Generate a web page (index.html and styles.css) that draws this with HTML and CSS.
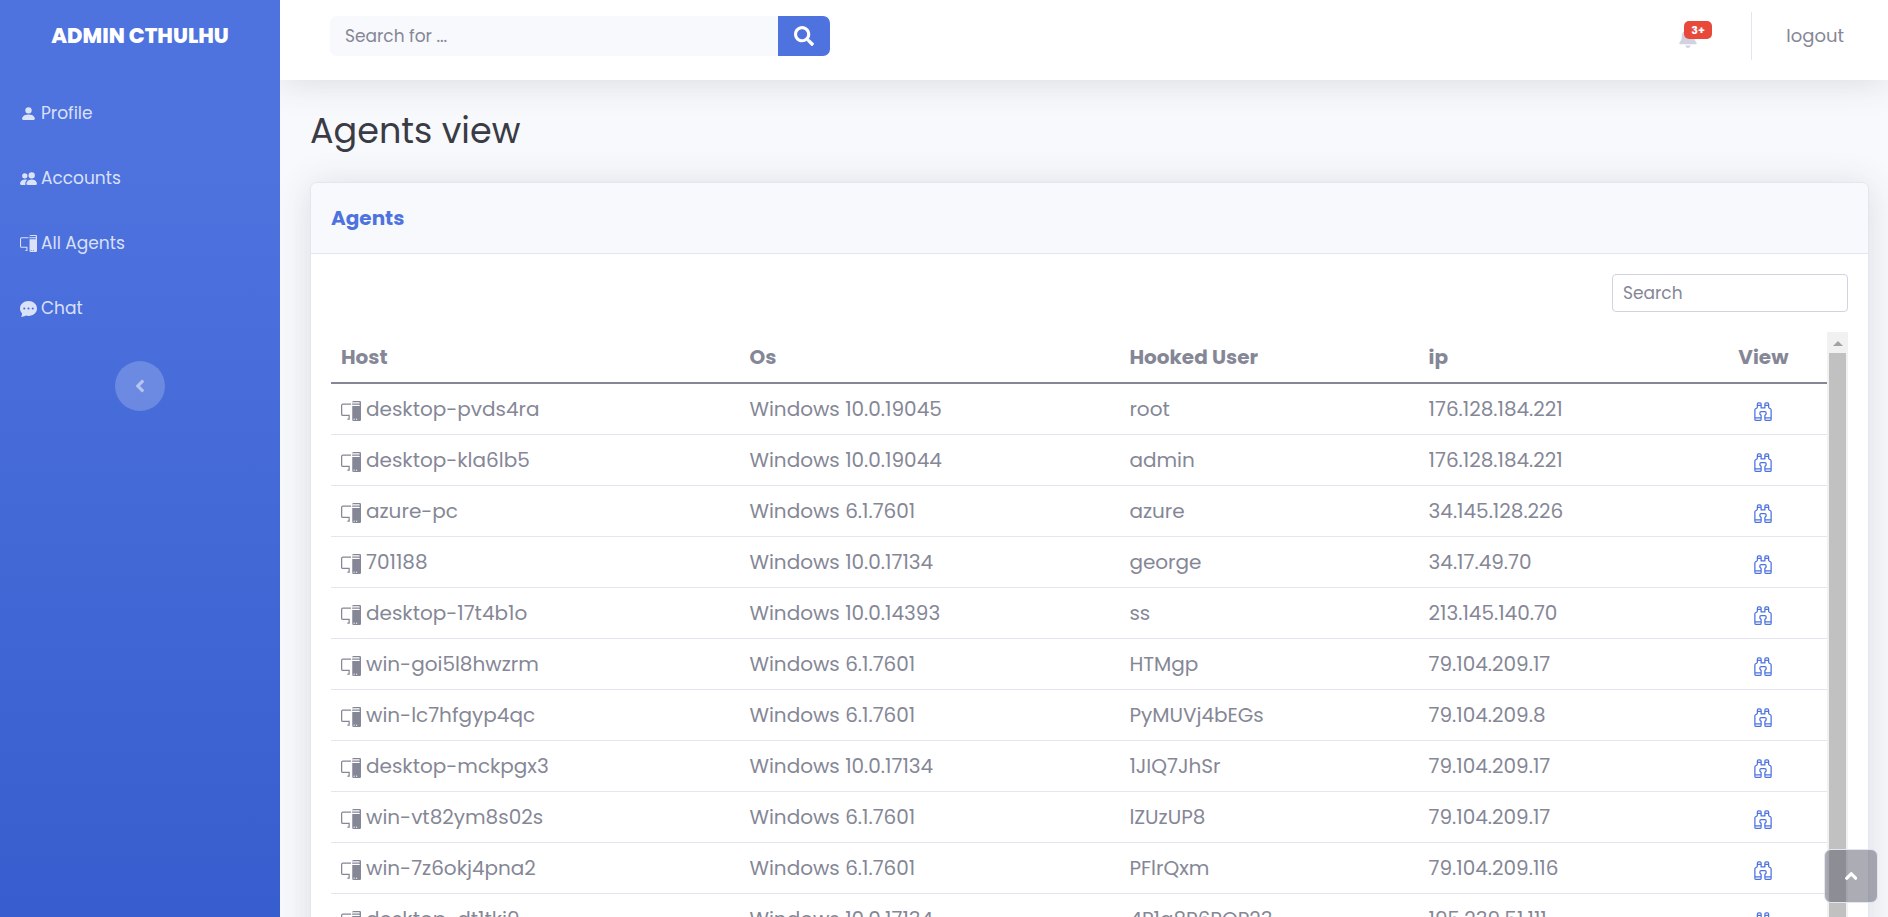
FILE: index.html
```
<!DOCTYPE html>
<html lang="en">
<head>
<meta charset="utf-8">
<title>Agents view</title>
<link rel="stylesheet" href="styles.css">
</head>
<body>
<svg class="sprite" aria-hidden="true">
  <symbol id="pc" viewBox="0 0 16 16"><path d="M9 1a1 1 0 0 1 1-1h5a1 1 0 0 1 1 1v14a1 1 0 0 1-1 1h-5a1 1 0 0 1-1-1V1Zm1 13.5a.5.5 0 1 0 1 0 .5.5 0 0 0-1 0Zm2 0a.5.5 0 1 0 1 0 .5.5 0 0 0-1 0ZM9.500 1a.5.5 0 0 0 0 1h5a.5.5 0 0 0 0-1h-5ZM9 3.500a.5.5 0 0 0 .5.5h5a.5.5 0 0 0 0-1h-5a.5.5 0 0 0-.5.5ZM1.500 2A1.500 1.500 0 0 0 0 3.500v7A1.500 1.500 0 0 0 1.500 12H6v2h-.5a.5.5 0 0 0 0 1H7v-4H1.500a.5.5 0 0 1-.5-.5v-7a.5.5 0 0 1 .5-.5H8V2H1.500Z"/></symbol>
  <symbol id="binoculars" viewBox="0 0 16 16"><path d="M3 2.500A1.500 1.500 0 0 1 4.500 1h1A1.500 1.500 0 0 1 7 2.500V5h2V2.500A1.500 1.500 0 0 1 10.500 1h1A1.500 1.500 0 0 1 13 2.500v2.382a.5.5 0 0 0 .276.447l.895.447A1.500 1.500 0 0 1 15 7.118V14.500a1.500 1.500 0 0 1-1.500 1.500h-3A1.500 1.500 0 0 1 9 14.500v-3a.5.5 0 0 1 .146-.354l.854-.853V9.500a.5.5 0 0 0-.5-.5h-3a.5.5 0 0 0-.5.5v.793l.854.853A.5.5 0 0 1 7 11.500v3A1.500 1.500 0 0 1 5.500 16h-3A1.500 1.500 0 0 1 1 14.500V7.118a1.500 1.500 0 0 1 .83-1.342l.894-.447A.5.5 0 0 0 3 4.882V2.500zM4.500 2a.5.5 0 0 0-.5.5V3h2v-.5a.5.5 0 0 0-.5-.5h-1zM6 4H4v.882a1.500 1.500 0 0 1-.83 1.342l-.894.447A.5.5 0 0 0 2 7.118V13h4v-1.293l-.854-.853A.5.5 0 0 1 5 10.500v-1A1.500 1.500 0 0 1 6.500 8h3A1.500 1.500 0 0 1 11 9.500v1a.5.5 0 0 1-.146.354l-.854.853V13h4V7.118a.5.5 0 0 0-.276-.447l-.895-.447A1.500 1.500 0 0 1 12 4.882V4h-2v1.500a.5.5 0 0 1-.5.5h-3a.5.5 0 0 1-.5-.5V4zm4-1h2v-.5a.5.5 0 0 0-.5-.5h-1a.5.5 0 0 0-.5.5V3zm4 11h-4v.5a.5.5 0 0 0 .5.5h3a.5.5 0 0 0 .5-.5V14zm-8 0H2v.5a.5.5 0 0 0 .5.5h3a.5.5 0 0 0 .5-.5V14z"/></symbol>
</svg>
<div class="shell">
  <nav class="sidebar">
    <a class="brand" href="#">ADMIN CTHULHU</a>
    <a class="nav-link" href="#"><svg class="nav-icon" viewBox="0 0 16 16"><path d="M3 14s-1 0-1-1 1-4 6-4 6 3 6 4-1 1-1 1H3Zm5-6a3 3 0 1 0 0-6 3 3 0 0 0 0 6Z"/></svg>Profile</a>
    <a class="nav-link" href="#"><svg class="nav-icon" viewBox="0 0 16 16"><path d="M7 14s-1 0-1-1 1-4 5-4 5 3 5 4-1 1-1 1H7Zm4-6a3 3 0 1 0 0-6 3 3 0 0 0 0 6Zm-5.784 6A2.238 2.238 0 0 1 5 13c0-1.355.68-2.750 1.936-3.720A6.325 6.325 0 0 0 5 9c-4 0-5 3-5 4s1 1 1 1h4.216ZM4.500 8a2.500 2.500 0 1 0 0-5 2.500 2.500 0 0 0 0 5Z"/></svg>Accounts</a>
    <a class="nav-link" href="#"><svg class="nav-icon"><use href="#pc"/></svg>All Agents</a>
    <a class="nav-link" href="#"><svg class="nav-icon" viewBox="0 0 16 16"><path d="M16 8c0 3.866-3.582 7-8 7a9.060 9.060 0 0 1-2.347-.306c-.584.296-1.925.864-4.181 1.234-.2.032-.352-.176-.273-.362.354-.836.674-1.950.77-2.966C.744 11.370 0 9.760 0 8c0-3.866 3.582-7 8-7s8 3.134 8 7zM5 8a1 1 0 1 0-2 0 1 1 0 0 0 2 0zm4 0a1 1 0 1 0-2 0 1 1 0 0 0 2 0zm3 1a1 1 0 1 0 0-2 1 1 0 0 0 0 2z"/></svg>Chat</a>
    <button class="collapse" type="button" aria-label="Collapse menu"><svg viewBox="0 0 256 512"><path d="M31.700 239l136-136c9.400-9.400 24.600-9.400 33.900 0l22.600 22.600c9.400 9.400 9.400 24.600 0 33.900L127.900 256l96.400 96.400c9.400 9.400 9.400 24.600 0 33.900L201.700 409c-9.400 9.400-24.600 9.400-33.900 0l-136-136c-9.500-9.400-9.500-24.600-.1-34z"/></svg></button>
  </nav>
  <div class="content">
    <header class="topbar">
      <form class="site-search">
        <input type="text" placeholder="Search for ..." aria-label="Search for">
        <button type="button" aria-label="Search"><svg viewBox="0 0 512 512"><path d="M505 442.700L405.300 343c-4.500-4.500-10.600-7-17-7H372c27.600-35.300 44-79.700 44-128C416 93.100 322.900 0 208 0S0 93.100 0 208s93.100 208 208 208c48.300 0 92.700-16.400 128-44v16.300c0 6.400 2.500 12.500 7 17l99.700 99.700c9.400 9.400 24.600 9.400 33.900 0l28.300-28.300c9.400-9.400 9.400-24.600.1-34zM208 336c-70.700 0-128-57.200-128-128 0-70.700 57.200-128 128-128 70.700 0 128 57.200 128 128 0 70.700-57.200 128-128 128z"/></svg></button>
      </form>
      <div class="user-nav">
        <a class="alerts" href="#" aria-label="Alerts"><svg viewBox="0 0 448 512"><path d="M224 512c35.320 0 63.970-28.650 63.970-64H160.030c0 35.350 28.650 64 63.970 64zm215.390-149.710c-19.320-20.760-55.470-51.990-55.470-154.290 0-77.700-54.480-139.900-127.940-155.160V32c0-17.670-14.320-32-31.980-32s-31.980 14.330-31.980 32v20.840C118.560 68.100 64.080 130.300 64.080 208c0 102.300-36.150 133.530-55.470 154.290-6 6.450-8.660 14.160-8.610 21.710.11 16.400 12.980 32 32.100 32h383.800c19.120 0 32-15.600 32.100-32 .05-7.550-2.610-15.270-8.610-21.710z"/></svg><span class="badge">3+</span></a>
        <a class="logout" href="#">logout</a>
      </div>
    </header>
    <main class="main">
      <h1>Agents view</h1>
      <section class="card">
        <h2>Agents</h2>
        <div class="card-body">
          <input class="filter" type="search" placeholder="Search" aria-label="Search agents">
          <div class="table-area">
            <table>
              <thead><tr><th class="c-host">Host</th><th class="c-os">Os</th><th class="c-user">Hooked User</th><th class="c-ip">ip</th><th class="c-view">View</th></tr></thead>
              <tbody id="agents"></tbody>
            </table>
            <div class="scroll-track" aria-hidden="true"><span class="scroll-arrow"></span><span class="scroll-thumb"></span></div>
          </div>
        </div>
      </section>
    </main>
  </div>
</div>
<a class="to-top" href="#" aria-label="Back to top"><svg viewBox="0 0 320 512"><path d="M177 159.700l136 136c9.400 9.400 9.400 24.600 0 33.900l-22.600 22.600c-9.400 9.400-24.600 9.400-33.900 0L160 255.900l-96.400 96.400c-9.400 9.400-24.600 9.400-33.900 0L7 329.700c-9.400-9.400-9.400-24.600 0-33.900l136-136c9.400-9.500 24.600-9.500 34-.1z"/></svg></a>
<script src="agents.js"></script>
</body>
</html>
```
FILE: styles.css
```
* { box-sizing: border-box; }
body {
  margin: 0;
  height: 100vh;
  overflow: hidden;
  background: #f8f9fc;
  color: #858796;
  font: 400 20px/30px Poppins, Inter, "Open Sans", sans-serif;
}
a { color: inherit; text-decoration: none; }
h1, h2 { margin: 0; }
svg { fill: currentColor; }
button { border: 0; padding: 0; cursor: pointer; }
input { font-family: inherit; color: #6e707e; outline: 0; }
input::placeholder { color: #858796; opacity: 1; }
.sprite { display: none; }

.shell { display: flex; min-height: 175vh; }
.sidebar {
  position: relative;
  z-index: 1;
  flex: 0 0 280px;
  display: flex;
  flex-direction: column;
  background: linear-gradient(180deg, #4e73df 10%, #224abe 100%);
  color: rgba(255, 255, 255, .8);
}
.brand {
  padding: 21px 20px;
  margin-bottom: 9px;
  color: #fff;
  font-size: 21px;
  font-weight: 800;
  text-align: center;
}
.nav-link {
  display: flex;
  align-items: center;
  gap: 4px;
  padding: 20px;
  font-size: 17px;
  line-height: 25px;
}
.nav-icon { width: 17px; height: 17px; }
.collapse {
  display: flex;
  align-items: center;
  justify-content: center;
  width: 50px;
  height: 50px;
  margin: 20px auto;
  border-radius: 50%;
  background: rgba(255, 255, 255, .2);
  color: rgba(255, 255, 255, .5);
}
.collapse svg { height: 20px; }

.content { flex: 1; min-width: 0; }
.topbar {
  display: flex;
  justify-content: space-between;
  height: 80px;
  padding: 0 44px 0 50px;
  background: #fff;
  box-shadow: 0 3px 35px rgba(58, 59, 69, .15);
}
.site-search { display: flex; width: 500px; height: 40px; margin-top: 16px; }
.site-search input {
  flex: 1;
  min-width: 0;
  padding: 0 15px;
  border: 0;
  border-radius: 7px 0 0 7px;
  background: #f8f9fc;
  font-size: 17px;
}
.site-search button {
  display: flex;
  align-items: center;
  justify-content: center;
  width: 52px;
  border-radius: 0 7px 7px 0;
  background: #4e73df;
  color: #fff;
}
.site-search svg { height: 20px; }
.user-nav { display: flex; height: 48px; margin-top: 12px; }
.alerts { position: relative; padding: 16px 54px 0 0; color: #d1d3e2; line-height: 0; }
.alerts svg { height: 20px; width: 18px; }
.badge {
  position: absolute;
  top: 9px;
  left: 5px;
  padding: 0 7px;
  border-radius: 5px;
  background: #e74a3b;
  color: #fff;
  font-size: 11px;
  font-weight: 700;
  line-height: 18px;
}
.logout {
  padding-left: 34px;
  border-left: 1px solid #e3e6f0;
  font-size: 18px;
  line-height: 48px;
}

.main { padding: 30px 19px 30px 30px; }
h1 { color: #3a3b45; font-size: 35px; font-weight: 400; line-height: 42px; margin-bottom: 30px; }
.card {
  border: 1px solid #e3e6f0;
  border-radius: 7px;
  background: #fff;
  box-shadow: 0 3px 35px rgba(58, 59, 69, .15);
}
h2 {
  padding: 20px;
  border-bottom: 1px solid #e3e6f0;
  border-radius: 7px 7px 0 0;
  background: #f8f9fc;
  color: #4e73df;
  font-size: 20px;
  font-weight: 700;
}
.card-body { display: flex; flex-direction: column; padding: 20px; }
.filter {
  align-self: flex-end;
  width: 236px;
  height: 38px;
  margin-bottom: 20px;
  padding: 0 10px;
  border: 1px solid #d1d3e2;
  border-radius: 4px;
  font-size: 17px;
}
.table-area { display: flex; }
table { flex: 1; border-collapse: separate; border-spacing: 0; table-layout: fixed; }
th, td { padding: 10px; border-bottom: 1px solid #e3e6f0; text-align: left; }
th { border-bottom: 2px solid #858796; font-weight: 700; }
.c-host { width: 27.3%; }
.c-os { width: 25.4%; }
.c-user { width: 20%; }
.c-ip { width: 18.8%; }
.c-view { width: 8.5%; text-align: center; }
.host { display: flex; align-items: center; gap: 5px; }
.host svg { width: 20px; height: 20px; margin-top: 4px; }
.view { display: flex; justify-content: center; color: #4e73df; }
.view svg { width: 20px; height: 20px; margin: 7px 0 3px; }
.scroll-track {
  display: flex;
  flex-direction: column;
  align-items: center;
  width: 21px;
  background: #f1f1f1;
}
.scroll-arrow {
  margin: 9px 0 7px;
  border: 5px solid transparent;
  border-top: 0;
  border-bottom-color: #a3a3a3;
}
.scroll-thumb { flex: 1; width: 17px; background: #c1c1c1; }

.to-top {
  position: fixed;
  right: 10px;
  bottom: 14px;
  display: flex;
  align-items: center;
  justify-content: center;
  width: 54px;
  height: 54px;
  border: 1px solid #e3e6f0;
  border-radius: 7px;
  background: rgba(90, 92, 105, .5);
  color: #fff;
}
.to-top svg { height: 20px; }
```
FILE: agents.js
```
const agents = [
  ["desktop-pvds4ra", "Windows 10.0.19045", "root", "176.128.184.221"],
  ["desktop-kla6lb5", "Windows 10.0.19044", "admin", "176.128.184.221"],
  ["azure-pc", "Windows 6.1.7601", "azure", "34.145.128.226"],
  ["701188", "Windows 10.0.17134", "george", "34.17.49.70"],
  ["desktop-17t4b1o", "Windows 10.0.14393", "ss", "213.145.140.70"],
  ["win-goi5l8hwzrm", "Windows 6.1.7601", "HTMgp", "79.104.209.17"],
  ["win-lc7hfgyp4qc", "Windows 6.1.7601", "PyMUVj4bEGs", "79.104.209.8"],
  ["desktop-mckpgx3", "Windows 10.0.17134", "1JIQ7JhSr", "79.104.209.17"],
  ["win-vt82ym8s02s", "Windows 6.1.7601", "lZUzUP8", "79.104.209.17"],
  ["win-7z6okj4pna2", "Windows 6.1.7601", "PFlrQxm", "79.104.209.116"],
  ["desktop-dt1tkj9", "Windows 10.0.17134", "4P1q8P6POP23", "195.239.51.111"]
];
document.getElementById("agents").innerHTML = agents.map(([host, os, user, ip]) => `
  <tr>
    <td><div class="host"><svg><use href="#pc"/></svg>${host}</div></td>
    <td>${os}</td><td>${user}</td><td>${ip}</td>
    <td><a class="view" href="#" aria-label="View ${host}"><svg><use href="#binoculars"/></svg></a></td>
  </tr>`).join("");
```
